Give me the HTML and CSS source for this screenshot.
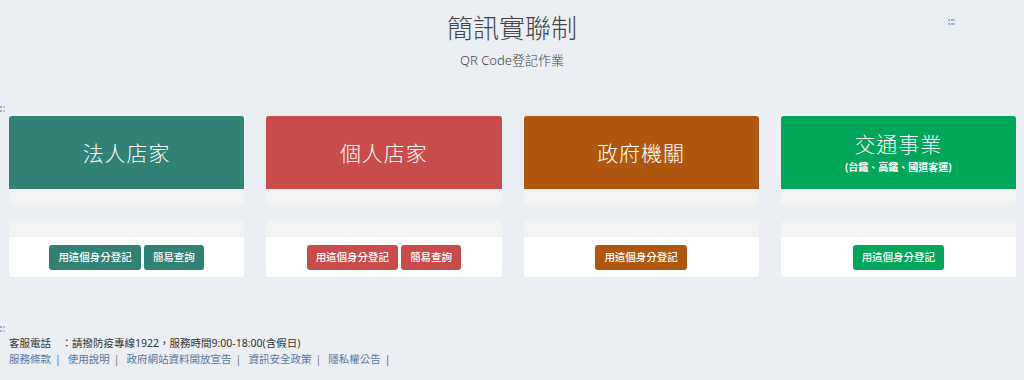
FILE: index.html
```html
<!DOCTYPE html>
<html lang="zh-Hant">
<head>
    <meta charset="UTF-8">
    <meta name="viewport" content="width=device-width, initial-scale=1.0">
    <title>簡訊實聯制</title>
    <link rel="stylesheet" href="styles.css">
</head>
<body>
    <!-- 編輯用的小把手 -->
    <svg class="handle handle-top" width="7" height="7" viewBox="0 0 7 7">
        <rect x="0" y="0" width="2" height="2" fill="#8fb0d6"/>
        <rect x="3" y="0" width="2" height="2" fill="#8fb0d6"/>
        <rect x="5" y="0" width="2" height="2" fill="#b9c7d8"/>
        <rect x="0" y="4" width="2" height="2" fill="#8fb0d6"/>
        <rect x="3" y="4" width="2" height="2" fill="#8fb0d6"/>
        <rect x="5" y="4" width="2" height="2" fill="#b9c7d8"/>
    </svg>
    <svg class="handle handle-left" width="5" height="7" viewBox="0 0 5 7">
        <rect x="0" y="0" width="2" height="2" fill="#8fb0d6"/>
        <rect x="3" y="0" width="2" height="2" fill="#b9c7d8"/>
        <rect x="0" y="4" width="2" height="2" fill="#8fb0d6"/>
        <rect x="3" y="4" width="2" height="2" fill="#b9c7d8"/>
    </svg>
    <svg class="handle handle-foot" width="5" height="7" viewBox="0 0 5 7">
        <rect x="0" y="0" width="2" height="2" fill="#8fb0d6"/>
        <rect x="3" y="0" width="2" height="2" fill="#b9c7d8"/>
        <rect x="0" y="4" width="2" height="2" fill="#8fb0d6"/>
        <rect x="3" y="4" width="2" height="2" fill="#b9c7d8"/>
    </svg>

    <header class="page-head">
        <h1>簡訊實聯制</h1>
        <p class="sub">QR Code登記作業</p>
    </header>

    <section class="cards">
        <div class="col">
            <div class="panel">
                <div class="panel-head teal"><span class="panel-title">法人店家</span></div>
                <div class="panel-strip"></div>
            </div>
            <div class="panel">
                <div class="panel-strip"></div>
                <div class="panel-body">
                    <a class="btn teal" href="#">用這個身分登記</a>
                    <a class="btn teal" href="#">簡易查詢</a>
                </div>
            </div>
        </div>

        <div class="col">
            <div class="panel">
                <div class="panel-head red"><span class="panel-title">個人店家</span></div>
                <div class="panel-strip"></div>
            </div>
            <div class="panel">
                <div class="panel-strip"></div>
                <div class="panel-body">
                    <a class="btn red" href="#">用這個身分登記</a>
                    <a class="btn red" href="#">簡易查詢</a>
                </div>
            </div>
        </div>

        <div class="col">
            <div class="panel">
                <div class="panel-head orange"><span class="panel-title">政府機關</span></div>
                <div class="panel-strip"></div>
            </div>
            <div class="panel">
                <div class="panel-strip"></div>
                <div class="panel-body">
                    <a class="btn orange" href="#">用這個身分登記</a>
                </div>
            </div>
        </div>

        <div class="col">
            <div class="panel">
                <div class="panel-head green">
                    <span class="panel-title">交通事業</span>
                    <span class="panel-note">(台鐵、高鐵、國道客運)</span>
                </div>
                <div class="panel-strip"></div>
            </div>
            <div class="panel">
                <div class="panel-strip"></div>
                <div class="panel-body">
                    <a class="btn green" href="#">用這個身分登記</a>
                </div>
            </div>
        </div>
    </section>

    <footer class="page-foot">
        <p class="service">客服電話　：請撥防疫專線1922，服務時間9:00-18:00(含假日)</p>
        <p class="links"><a href="#">服務條款</a><span class="sep">|</span><a href="#">使用說明</a><span class="sep">|</span><a href="#">政府網站資料開放宣告</a><span class="sep">|</span><a href="#">資訊安全政策</a><span class="sep">|</span><a href="#">隱私權公告</a><span class="sep last">|</span></p>
    </footer>
</body>
</html>
```

FILE: styles.css
```css
body {
    margin: 0;
    background-color: #ebeef3;
    font-family: "Noto Sans", "Noto Sans CJK TC", sans-serif;
    color: #333;
}

.handle {
    position: absolute;
    display: block;
}

.handle-top {
    left: 948px;
    top: 19px;
}

.handle-left {
    left: 0;
    top: 106px;
}

.handle-foot {
    left: 0;
    top: 326px;
}

.page-head {
    padding-top: 11px;
    text-align: center;
}

.page-head h1 {
    margin: 0;
    font-size: 26px;
    line-height: 34px;
    font-weight: 300;
    color: #444;
}

.sub {
    margin: 5px 0 0;
    font-size: 13px;
    line-height: 20px;
    font-weight: 300;
    color: #444;
}

.cards {
    display: grid;
    grid-template-columns: repeat(4, 1fr);
    column-gap: 22px;
    padding: 0 8px 0 9px;
    margin-top: 46px;
}

.col {
    display: flex;
    flex-direction: column;
    gap: 16px;
}

.panel {
    border-radius: 3px;
    overflow: hidden;
}

.panel-head {
    height: 73px;
    display: flex;
    flex-direction: column;
    align-items: center;
    justify-content: center;
    color: #fff;
}

.panel-title {
    font-size: 21px;
    line-height: 26px;
    font-weight: 300;
    letter-spacing: 1px;
}

.panel-note {
    font-size: 10px;
    line-height: 14px;
    font-weight: 700;
    margin-top: 3px;
}

.panel-strip {
    height: 16px;
    background-color: #f3f3f3;
}

.panel-body {
    background-color: #fff;
    padding: 8px 0 7px;
    display: flex;
    justify-content: center;
    gap: 3px;
}

.btn {
    display: inline-block;
    height: 25px;
    line-height: 25px;
    padding: 0 9px;
    border-radius: 3px;
    font-size: 10.5px;
    font-weight: 500;
    color: #fff;
    text-decoration: none;
}

.teal {
    background-color: #318274;
}

.red {
    background-color: #c94c4d;
}

.orange {
    background-color: #b0570f;
}

.green {
    background-color: #00a65a;
}

.page-foot {
    margin-top: 58px;
    padding-left: 9px;
    font-size: 10.5px;
    line-height: 16px;
}

.page-foot p {
    margin: 0;
}

.links a {
    color: #5677a6;
    text-decoration: none;
}

.sep {
    color: #777;
    margin: 0 7px 0 4px;
}

.links .last {
    color: #a3358e;
    margin-right: 0;
}
```
